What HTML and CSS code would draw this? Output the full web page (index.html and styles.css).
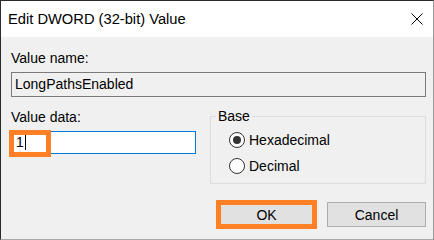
FILE: index.html
```html
<!DOCTYPE html>
<html lang="en">
<head>
    <meta charset="UTF-8">
    <title>Edit DWORD (32-bit) Value</title>
    <link rel="stylesheet" href="styles.css">
</head>
<body>

    <div class="dialog">
        <!-- Title bar -->
        <div class="titlebar">
            <span class="title">Edit DWORD (32-bit) Value</span>
            <span class="close">
                <svg width="12" height="12" viewBox="0 0 12 12">
                    <path d="M0.5 0.5 L11.5 11.5 M11.5 0.5 L0.5 11.5" stroke="#000" stroke-width="1" fill="none"/>
                </svg>
            </span>
        </div>

        <div class="content">
            <div class="label">Value name:</div>
            <div class="textbox readonly">LongPathsEnabled</div>

            <div class="row">
                <div class="data-col">
                    <div class="label">Value data:</div>
                    <div class="textbox active">
                        <span class="value">1</span><span class="caret"></span>
                        <span class="highlight"></span>
                    </div>
                </div>

                <div class="group">
                    <span class="group-label">Base</span>
                    <div class="radio-row">
                        <span class="radio checked"></span>
                        <span>Hexadecimal</span>
                    </div>
                    <div class="radio-row">
                        <span class="radio"></span>
                        <span>Decimal</span>
                    </div>
                </div>
            </div>

            <div class="buttons">
                <div class="btn btn-ok">OK</div>
                <div class="btn">Cancel</div>
            </div>
        </div>
    </div>

</body>
</html>
```

FILE: styles.css
```css
/* Basic Reset & Font */
body, html {
    margin: 0;
    padding: 0;
    font-family: "Liberation Sans", Arial, sans-serif;
    color: #000;
    background-color: #f0f0f0;
}

/* Window frame */
.dialog {
    width: 434px;
    height: 240px;
    box-sizing: border-box;
    border-style: solid;
    border-width: 1px;
    border-color: #2b2b2b #9a9a9a #a8a8a8 #2b2b2b;
    display: flex;
    flex-direction: column;
    background-color: #f0f0f0;
}

.titlebar {
    height: 36px;
    flex: 0 0 36px;
    background-color: #fff;
    display: flex;
    align-items: center;
    padding-left: 7px;
    padding-right: 10px;
}

.title {
    flex: 1;
    font-size: 14.7px;
}

.close svg {
    display: block;
}

/* Dialog body */
.content {
    flex: 1;
    padding: 13px 7px 0 10px;
    font-size: 14px;
}

.label {
    line-height: 16px;
}

.textbox {
    box-sizing: border-box;
    height: 25px;
    border: 1px solid #7a7a7a;
    padding-left: 3px;
    line-height: 23px;
}

.textbox.readonly {
    margin-top: 6px;
    background-color: #f0f0f0;
}

.row {
    display: grid;
    grid-template-columns: 199px 1fr;
    margin-top: 12px;
}

.textbox.active {
    position: relative;
    width: 185px;
    height: 23px;
    margin-top: 6px;
    line-height: 21px;
    background-color: #fff;
    border-color: #0078d7;
    padding-left: 4px;
}

.caret {
    display: inline-block;
    width: 1px;
    height: 15px;
    margin-left: 1px;
    vertical-align: -3px;
    background-color: #000;
}

/* Orange annotation box */
.highlight {
    position: absolute;
    left: -3px;
    top: -2px;
    width: 42px;
    height: 27px;
    box-sizing: border-box;
    border: 5px solid #ff7f27;
}

/* Base group box */
.group {
    position: relative;
    margin-top: 7px;
    height: 68px;
    box-sizing: border-box;
    border: 1px solid #dcdcdc;
    padding: 10px 0 0 18px;
}

.group-label {
    position: absolute;
    top: -9px;
    left: 5px;
    padding: 0 2px;
    line-height: 16px;
    background-color: #f0f0f0;
}

.radio-row {
    display: flex;
    align-items: center;
    gap: 4px;
    height: 26px;
}

.radio {
    box-sizing: border-box;
    width: 16px;
    height: 16px;
    border: 1px solid #333;
    border-radius: 50%;
    background-color: #fff;
    display: flex;
    align-items: center;
    justify-content: center;
}

.radio.checked::after {
    content: "";
    width: 8px;
    height: 8px;
    border-radius: 50%;
    background-color: #333;
}

/* Buttons */
.buttons {
    display: flex;
    justify-content: flex-end;
    align-items: center;
    gap: 10px;
    margin-top: 16px;
}

.btn {
    box-sizing: border-box;
    width: 99px;
    height: 25px;
    border: 1px solid #adadad;
    background-color: #e1e1e1;
    display: flex;
    align-items: center;
    justify-content: center;
}

.btn-ok {
    width: 101px;
    height: 29px;
    border: 5px solid #ff7f27;
}
```
